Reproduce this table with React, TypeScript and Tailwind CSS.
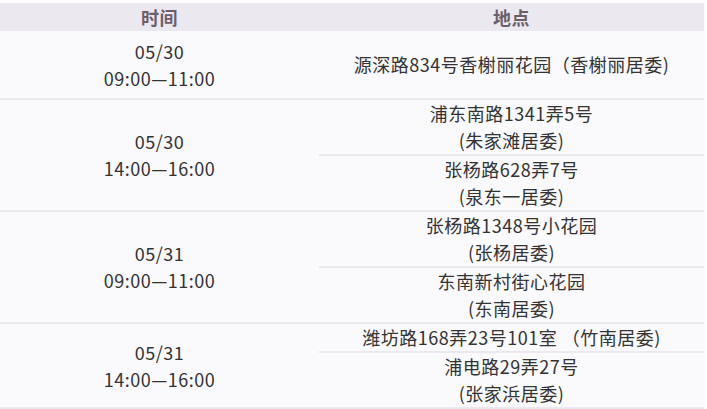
import React from 'react';

type Row = { date: string; time: string; places: string[][] };

const rows: Row[] = [
  { date: '05/30', time: '09:00—11:00', places: [['源深路834号香榭丽花园（香榭丽居委)']] },
  {
    date: '05/30',
    time: '14:00—16:00',
    places: [
      ['浦东南路1341弄5号', '(朱家滩居委)'],
      ['张杨路628弄7号', '(泉东一居委)'],
    ],
  },
  {
    date: '05/31',
    time: '09:00—11:00',
    places: [
      ['张杨路1348号小花园', '(张杨居委)'],
      ['东南新村街心花园', '(东南居委)'],
    ],
  },
  {
    date: '05/31',
    time: '14:00—16:00',
    places: [['潍坊路168弄23号101室 （竹南居委)'], ['浦电路29弄27号', '(张家浜居委)']],
  },
];

export default function App() {
  return (
    <div
      className="w-[707px] h-[409px] bg-white pt-[3px] overflow-hidden text-[#333] text-[18px] leading-[27px] tracking-[0.5px]"
      style={{ fontFamily: '"Noto Sans CJK SC", "Noto Sans", sans-serif' }}
    >
      <div className="w-[704px] bg-[#faf9fc]">
        <div className="flex h-[28px] bg-[#ece8ef] font-bold text-[#6b5f6b]">
          <div className="w-[319px] flex items-center justify-center">时间</div>
          <div className="flex-1 flex items-center justify-center">地点</div>
        </div>
        {rows.map((row, i) => (
          <div key={i} className={`flex border-b-2 border-[#ebe8f0] ${i === 0 ? 'min-h-[69px]' : ''}`}>
            <div className="w-[319px] flex flex-col items-center justify-center py-[6px]">
              <div>{row.date}</div>
              <div>{row.time}</div>
            </div>
            <div className="flex-1 flex flex-col justify-center">
              {row.places.map((lines, j) => (
                <div
                  key={j}
                  className={`flex flex-col items-center justify-center ${j > 0 ? 'border-t-2 border-[#ebe8f0]' : ''}`}
                >
                  {lines.map((l, k) => (
                    <div key={k}>{l}</div>
                  ))}
                </div>
              ))}
            </div>
          </div>
        ))}
      </div>
    </div>
  );
}
